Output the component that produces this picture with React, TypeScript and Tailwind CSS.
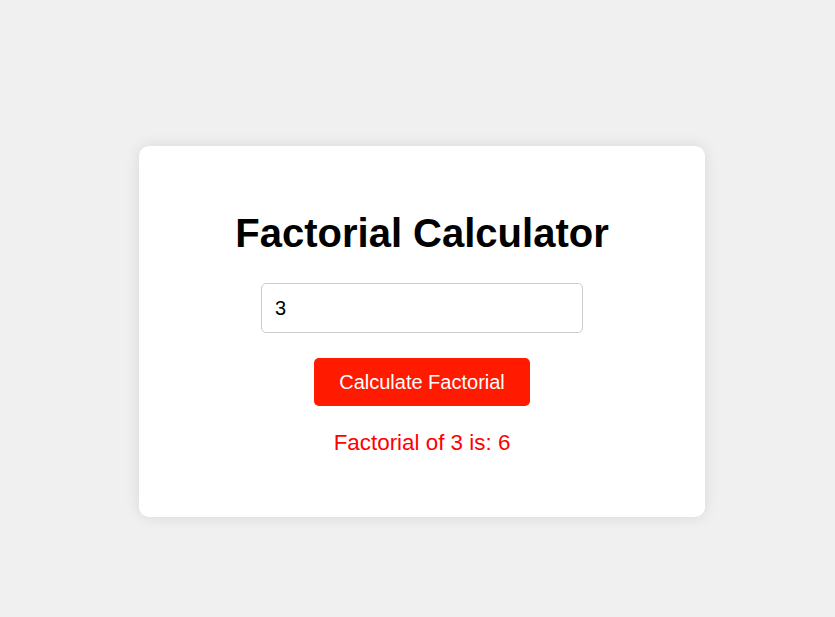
import React, { useState } from "react";

function factorial(n: number): number {
  let r = 1;
  for (let i = 2; i <= n; i++) r *= i;
  return r;
}

export default function App() {
  const [value, setValue] = useState("3");
  const [result, setResult] = useState<string>("Factorial of 3 is: 6");

  const calc = () => {
    const n = parseInt(value, 10);
    if (isNaN(n) || n < 0) {
      setResult("Please enter a non-negative integer");
      return;
    }
    setResult(`Factorial of ${n} is: ${factorial(n)}`);
  };

  return (
    <div
      className="w-full h-[617px] bg-[#f0f0f0] pt-[146px] pl-[139px]"
      style={{ fontFamily: '"Liberation Sans", Arial, sans-serif' }}
    >
      <div className="w-[566px] h-[371px] bg-white rounded-[10px] shadow-[0_0_15px_rgba(0,0,0,0.1)] pt-[64px] flex flex-col items-center">
        <h1 className="text-[40px] leading-[46px] font-bold text-black">Factorial Calculator</h1>
        <input
          type="text"
          value={value}
          onChange={(e) => setValue(e.target.value)}
          className="mt-[27px] w-[322px] h-[50px] border border-[#cccccc] rounded-[5px] px-[13px] text-[20px] text-black outline-none"
        />
        <button
          onClick={calc}
          className="mt-[25px] w-[216px] h-[48px] bg-[#ff1a00] text-white text-[20px] rounded-[5px]"
        >
          Calculate Factorial
        </button>
        <div className="mt-[24px] text-[22.4px] leading-[26px] text-[#ff0000]">{result}</div>
      </div>
    </div>
  );
}
